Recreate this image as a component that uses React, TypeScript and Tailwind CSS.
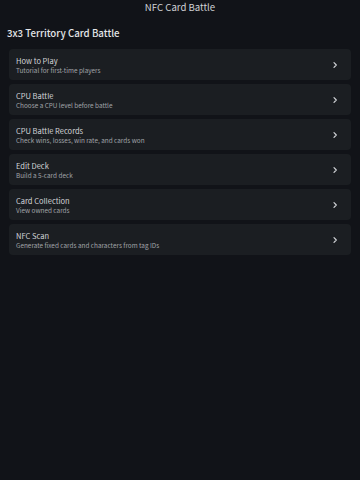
import React from "react";

const items = [
  { t: "How to Play", s: "Tutorial for first-time players" },
  { t: "CPU Battle", s: "Choose a CPU level before battle" },
  { t: "CPU Battle Records", s: "Check wins, losses, win rate, and cards won" },
  { t: "Edit Deck", s: "Build a 5-card deck" },
  { t: "Card Collection", s: "View owned cards" },
  { t: "NFC Scan", s: "Generate fixed cards and characters from tag IDs" },
];

function Chevron() {
  return (
    <svg width="8" height="8" viewBox="0 0 8 8" fill="none">
      <path d="M3 1.6 L5.3 4 L3 6.4" stroke="#cfd2d6" strokeWidth="1.2" strokeLinecap="round" strokeLinejoin="round" />
    </svg>
  );
}

export default function App() {
  return (
    <div className="w-[360px] h-[480px] bg-[#111318] text-[#e5e7eb] overflow-hidden" style={{ fontFamily: '"Noto Sans CJK JP", sans-serif' }}>
      <div className="h-[15px] flex items-center justify-center text-[9.6px] text-[#cfd1d4] leading-none">NFC Card Battle</div>
      <div className="px-[7px] pt-[11px] pb-[9px] text-[9.7px] font-medium leading-[14px] text-[#e3e5e8]">3x3 Territory Card Battle</div>
      <div className="px-[9px] flex flex-col gap-[4px]">
        {items.map((it) => (
          <div key={it.t} className="h-[31px] rounded-[4px] bg-[#1b1e22] flex items-center pl-[7px] pr-[12px]">
            <div className="flex-1 flex flex-col pt-[1px]">
              <div className="text-[7.5px] leading-[10px] text-[#d2d4d7]">{it.t}</div>
              <div className="text-[6.4px] leading-[9px] text-[#a0a3a8]">{it.s}</div>
            </div>
            <Chevron />
          </div>
        ))}
      </div>
    </div>
  );
}
